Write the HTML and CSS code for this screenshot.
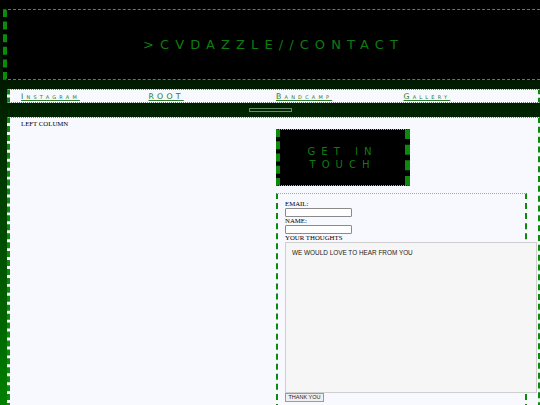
FILE: index.html
```html
<!DOCTYPE html>
<html>
<head>
<meta charset="utf-8">
<title>CVDAZZLE // CONTACT</title>
<link rel="stylesheet" href="styles.css">
</head>
<body>
  <header class="site-header">
    <h1 class="site-title">&gt;CVDAZZLE//CONTACT</h1>
  </header>
  <nav class="site-nav">
    <a class="nav-link" href="#">Instagram</a>
    <a class="nav-link" href="#">ROOT</a>
    <a class="nav-link" href="#">Bandcamp</a>
    <a class="nav-link" href="#">Gallery</a>
  </nav>
  <div class="divider"><span class="divider-box"></span></div>
  <main class="content">
    <section class="left-col">LEFT COLUMN</section>
    <section class="right-col">
      <div class="touch-box"><h2 class="touch-title">GET IN TOUCH</h2></div>
      <form class="contact-form">
        <label class="form-label">EMAIL:</label>
        <input class="form-input" type="text">
        <label class="form-label">NAME:</label>
        <input class="form-input" type="text">
        <label class="form-label">YOUR THOUGHTS</label>
        <textarea class="form-text">WE WOULD LOVE TO HEAR FROM YOU</textarea>
        <button class="form-btn" type="button">THANK YOU</button>
      </form>
    </section>
  </main>
</body>
</html>
```

FILE: styles.css
```css
html, body {
  margin: 0;
  padding: 0;
  height: 405px;
  overflow: hidden;
}
body {
  background: linear-gradient(to bottom, #000000 0%, #008000 100%);
  font-family: "Liberation Serif", "Times New Roman", serif;
  font-size: 6.8px;
  color: #000;
}
.site-header {
  margin: 9px 0 0 3px;
  height: 69px;
  background: #000;
  border-left: 4px dashed #0d8a0d;
  border-top: 1px dashed #2f9e2f;
  border-bottom: 1px dashed #2f9e2f;
  display: flex;
  align-items: center;
  justify-content: center;
}
.site-title {
  margin: 0;
  font-family: "DejaVu Sans", sans-serif;
  font-weight: normal;
  font-size: 13px;
  letter-spacing: 6.1px;
  color: #0f7d0f;
}
.site-nav {
  margin: 9px 0 0 7px;
  height: 12px;
  background: #f8f8ff;
  border-left: 3px dashed #0b8a0b;
  border-right: 2px dashed #0b8a0b;
  border-top: 1px dotted #3c9a3c;
  border-bottom: 1px dotted #3c9a3c;
  display: grid;
  grid-template-columns: repeat(4, 127.5px);
  padding-left: 11px;
  align-items: center;
}
.nav-link {
  font-family: "DejaVu Sans", sans-serif;
  font-variant: small-caps;
  font-size: 7.8px;
  letter-spacing: 3.2px;
  color: #2a7a2a;
  text-decoration: underline;
  line-height: 9px;
}
.divider {
  height: 14px;
  display: flex;
  justify-content: center;
  align-items: center;
}
.divider-box {
  width: 41px;
  height: 2px;
  border: 1px solid #6b8a6b;
}
.content {
  margin-left: 7px;
  height: 300px;
  background: #f8f8ff;
  border-left: 3px dashed #0b8a0b;
  border-right: 2px dashed #0b8a0b;
  border-top: 1px dotted #5aa85a;
  display: grid;
  grid-template-columns: 266px 1fr;
}
.left-col {
  padding: 2px 11px;
  line-height: 8px;
}
.right-col {
  padding-top: 11px;
}
.touch-box {
  width: 125px;
  height: 55px;
  background: #000;
  border-left: 4px dashed #0d8a0d;
  border-right: 5px dashed #0d8a0d;
  border-top: 1px dotted #7fd07f;
  border-bottom: 1px dotted #7fd07f;
  display: flex;
  align-items: center;
  justify-content: center;
}
.touch-title {
  margin: 0;
  width: 100px;
  text-align: center;
  font-family: "DejaVu Sans", sans-serif;
  font-weight: normal;
  font-size: 10px;
  line-height: 13px;
  letter-spacing: 6px;
  color: #0f7d0f;
}
.contact-form {
  margin-top: 7px;
  width: 240px;
  height: 220px;
  border-left: 2px dashed #0b8a0b;
  border-right: 2px dashed #0b8a0b;
  border-top: 1px dotted #7fbf7f;
  padding: 6px 0 0 7px;
  display: flex;
  flex-direction: column;
  align-items: flex-start;
}
.form-label {
  display: block;
  line-height: 8px;
  height: 8px;
}
.form-input {
  box-sizing: border-box;
  width: 67px;
  height: 9px;
  margin: 0;
  padding: 0;
  border: 1px solid #8a8a8a;
  border-radius: 1px;
  background: #fff;
}
.form-text {
  box-sizing: border-box;
  width: 252px;
  height: 151px;
  margin: 0;
  padding: 6px 6px;
  border: 1px solid #cfcfcf;
  background: #f6f6f6;
  font-family: "Liberation Sans", Arial, sans-serif;
  font-size: 6.4px;
  color: #222;
  resize: none;
}
.form-btn {
  box-sizing: border-box;
  width: 39px;
  height: 9px;
  margin: 0;
  padding: 0;
  border: 1px solid #9a9a9a;
  background: #efefef;
  font-family: "Liberation Sans", Arial, sans-serif;
  font-size: 5.5px;
  color: #222;
  line-height: 7px;
}
```
